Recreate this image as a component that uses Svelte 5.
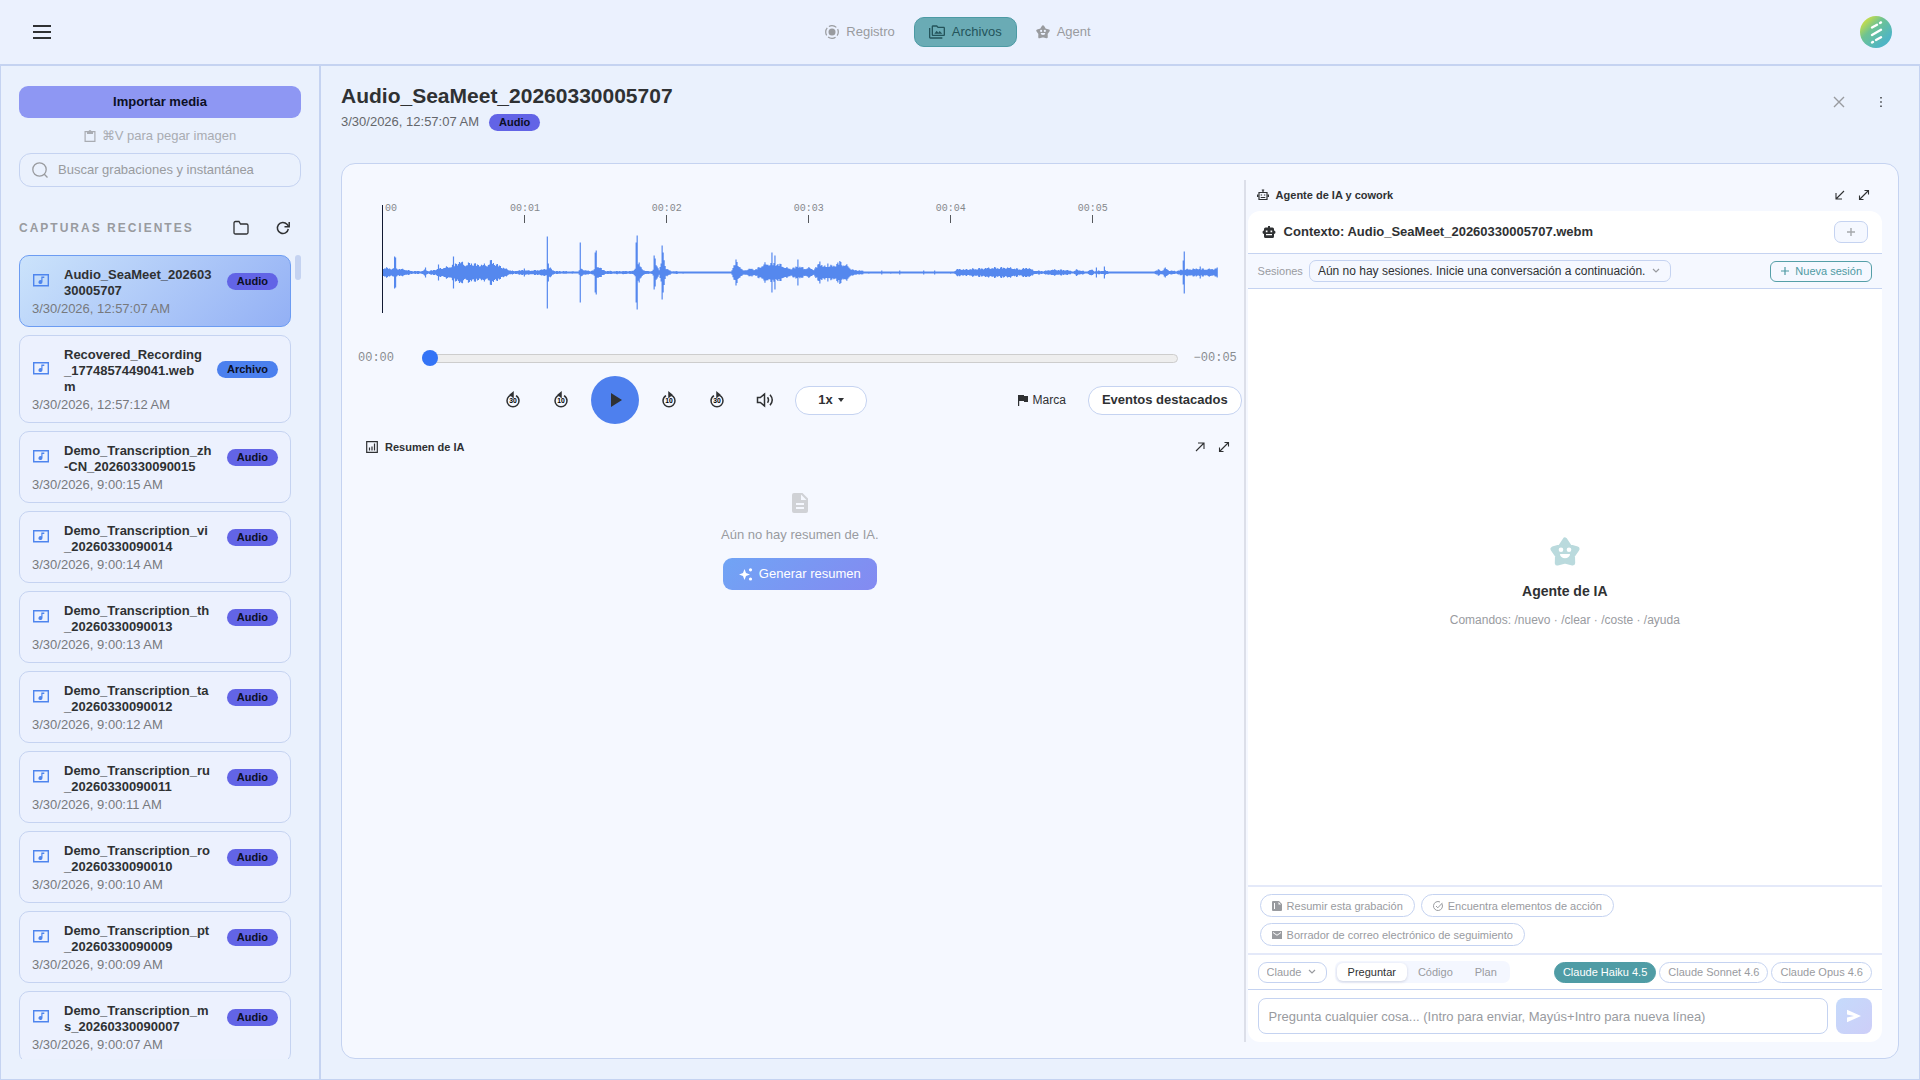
<script>
  const recordings = [
    { name: 'Audio_SeaMeet_20260330005707', date: '3/30/2026, 12:57:07 AM', kind: 'Audio', active: true },
    { name: 'Recovered_Recording_1774857449041.webm', date: '3/30/2026, 12:57:12 AM', kind: 'Archivo' },
    { name: 'Demo_Transcription_zh-CN_20260330090015', date: '3/30/2026, 9:00:15 AM', kind: 'Audio' },
    { name: 'Demo_Transcription_vi_20260330090014', date: '3/30/2026, 9:00:14 AM', kind: 'Audio' },
    { name: 'Demo_Transcription_th_20260330090013', date: '3/30/2026, 9:00:13 AM', kind: 'Audio' },
    { name: 'Demo_Transcription_ta_20260330090012', date: '3/30/2026, 9:00:12 AM', kind: 'Audio' },
    { name: 'Demo_Transcription_ru_20260330090011', date: '3/30/2026, 9:00:11 AM', kind: 'Audio' },
    { name: 'Demo_Transcription_ro_20260330090010', date: '3/30/2026, 9:00:10 AM', kind: 'Audio' },
    { name: 'Demo_Transcription_pt_20260330090009', date: '3/30/2026, 9:00:09 AM', kind: 'Audio' },
    { name: 'Demo_Transcription_ms_20260330090007', date: '3/30/2026, 9:00:07 AM', kind: 'Audio' }
  ];

  const duration = 5.88;
  const marks = [1, 2, 3, 4, 5];

  // Loudness envelope: [position, half height], joined by straight lines.
  const envelope = [
    [0, 5], [9, 4], [14, 4], [22, 3], [28, 1.5], [38, 1.5], [42, 3], [45, 1.5], [52, 3], [60, 5], [66, 6],
    [72, 9], [77, 11], [82, 8], [88, 10], [94, 8], [104, 8], [108, 12], [112, 9], [118, 6], [122, 4], [126, 2.5],
    [130, 1.5], [141, 2.5], [145, 2], [155, 2.5], [162, 3.5], [166, 5], [169, 3], [172, 1.5], [195, 1], [198, 4],
    [201, 2.5], [207, 1.5], [211, 3], [215, 7], [219, 3], [223, 1.5], [250, 1.5], [252, 5], [256, 9], [259, 4],
    [262, 1.5], [269, 1.5], [273, 10], [276, 3], [278, 8], [281, 14], [283, 4], [288, 1.5], [300, 1], [348, 1],
    [350, 5], [353, 12], [357, 6], [360, 2], [368, 4], [372, 3], [377, 6], [382, 9], [388, 9], [394, 9],
    [398, 8], [403, 5], [408, 4], [414, 6], [418, 6], [421, 4], [426, 5], [431, 3], [437, 10], [441, 6],
    [446, 7], [451, 7], [457, 11], [461, 8], [465, 7], [468, 4], [471, 2.5], [479, 2], [482, 1], [571, 1],
    [576, 4], [581, 3], [594, 4], [614, 5], [626, 5], [637, 3.5], [646, 5], [651, 2], [661, 1.5], [671, 3],
    [684, 2.5], [691, 1], [694, 3], [699, 2], [704, 1], [709, 3], [712, 1.5], [723, 2], [727, 1], [772, 1],
    [776, 3], [780, 2], [783, 5], [787, 2], [794, 1.5], [800, 3], [817, 4], [824, 3.5], [834, 4]
  ];
  const peaks = {
    11: 16, 12: 15, 42: 5, 55: 8, 70: 16, 141: 4, 164: 36, 165: 9, 197: 30, 212: 20, 213: 22, 253: 30, 254: 37,
    271: 17, 272: 14, 279: 27, 280: 20, 389: 20, 392: 17, 415: 13, 437: 11, 445: 9, 499: 2, 517: 2, 541: 2,
    552: 2, 714: 5, 722: 6, 783: 5, 801: 12, 802: 21, 818: 6, 835: 5
  };

  function loudness(x) {
    for (let i = 1; i < envelope.length; i++) {
      const [x1, y1] = envelope[i];
      const [x0, y0] = envelope[i - 1];
      if (x <= x1) return y0 + ((y1 - y0) * (x - x0)) / (x1 - x0);
    }
    return 4;
  }

  let wave = '';
  for (let x = 0; x < 836; x++) {
    const ripple = 0.72 + 0.28 * Math.abs(Math.sin(x * 12.9898) * Math.cos(x * 4.137)) * 1.5;
    const h = peaks[x] ?? Math.max(0.9, loudness(x) * ripple);
    wave += `M${x} ${(67.5 - h).toFixed(1)}h1.2v${(h * 2).toFixed(1)}h-1.2z`;
  }

  const models = ['Claude Haiku 4.5', 'Claude Sonnet 4.6', 'Claude Opus 4.6'];
  const modes = ['Preguntar', 'Código', 'Plan'];
  let position = 0;
  let question = '';
  let search = '';
</script>

{#snippet star()}
  <svg class="star" viewBox="0 0 30 30" aria-hidden="true">
    <path d="M15 3 19.300 9.700 27 12 22.500 18.500 22.700 26 15 24 7.300 26 7.500 18.500 3 12 10.700 9.700z" fill="currentColor" stroke="currentColor" stroke-width="5" stroke-linejoin="round" />
    <circle class="face" cx="11" cy="12.700" r="2.300" /><circle class="face" cx="19" cy="12.700" r="2.300" />
    <path class="face" d="M10 17h10a5 4.300 0 0 1-10 0z" />
  </svg>
{/snippet}

{#snippet expand()}
  <svg class="i12" viewBox="0 0 12 12" aria-hidden="true"><path d="M2 10 10 2M6.500 1.500h4v4M5.500 10.500h-4v-4" fill="none" stroke="currentColor" stroke-width="1.100" /></svg>
{/snippet}

{#snippet skip(seconds, forward)}
  <svg class="i18" viewBox="0 0 24 24" aria-hidden="true">
    <path d={forward ? 'M4 13a8 8 0 1 0 8-8h2M4 13a8 8 0 0 1 4-6.900' : 'M20 13a8 8 0 1 1-8-8h-2M20 13a8 8 0 0 0-4-6.900'} stroke-dasharray="37.500 3 12" fill="none" stroke="currentColor" stroke-width="2" />
    <path d={forward ? 'M11 0l6 5-6 5z' : 'M13 0 7 5l6 5z'} fill="currentColor" />
    <text x="12" y="16.500" text-anchor="middle">{seconds}</text>
  </svg>
{/snippet}

<div class="app">
  <header class="topbar">
    <button class="plain menu" aria-label="Menú">
      <svg class="i20" viewBox="0 0 20 20" aria-hidden="true"><path d="M1 4h18M1 10h18M1 16h18" stroke="currentColor" stroke-width="2" /></svg>
    </button>
    <nav>
      <button class="tab">
        <svg class="i14" viewBox="1 1 14 14" aria-hidden="true"><circle cx="8" cy="8" r="3.500" fill="currentColor" /><circle cx="8" cy="8" r="6.300" fill="none" stroke="currentColor" stroke-width="1.200" stroke-dasharray="7.900 2" stroke-dashoffset="4" /></svg>
        Registro
      </button>
      <button class="tab current">
        <svg class="i16" viewBox="0 0 24 24" aria-hidden="true"><path d="M2 6H0v14c0 1.100.9 2 2 2h18v-2H2V6zm20-2h-8l-2-2H6c-1.100 0-2 .9-2 2v12c0 1.100.9 2 2 2h16c1.100 0 2-.9 2-2V6c0-1.100-.9-2-2-2zm0 12H6V4h5.200l2 2H22v10z" fill="currentColor" /><path d="M8 14.500l3.500-4.500 2.500 3 2-2.500 4 4z" fill="currentColor" /></svg>
        Archivos
      </button>
      <button class="tab">{@render star()}Agent</button>
    </nav>
    <button class="plain avatar" aria-label="Cuenta">
      <svg viewBox="0 0 32 32" aria-hidden="true">
        <defs><linearGradient id="brand" x1="0" y1="0" x2=".75" y2=".8"><stop offset=".08" stop-color="#e3e532" /><stop offset=".5" stop-color="#6ec392" /><stop offset="1" stop-color="#4fb5c4" /></linearGradient></defs>
        <circle cx="16" cy="16" r="16" fill="url(#brand)" />
        <path d="M12 11.500 17 8.800M20 7l1-.6M12 19l9-5.200M12 26.500l1-.6M16 24l5-2.700" stroke="#fff" stroke-width="2.400" stroke-linecap="round" />
      </svg>
    </button>
  </header>

  <div class="body">
    <aside>
      <button class="import">Importar media</button>
      <p class="hint">
        <svg class="i12" viewBox="0 0 12 12" aria-hidden="true"><path d="M1.100 1.600h9.800v9.800H1.100z" fill="none" stroke="currentColor" stroke-width="1.200" /><path d="M3 1h1.500q1.500-1.800 3 0H9v3H3z" fill="currentColor" /></svg>
        ⌘V para pegar imagen
      </p>
      <label class="search">
        <svg class="i16" viewBox="0 0 16 16" aria-hidden="true"><circle cx="7.500" cy="7.500" r="6.700" fill="none" stroke="currentColor" stroke-width="1.300" /><path d="m12.300 12.300 3.200 3.200" stroke="currentColor" stroke-width="1.300" /></svg>
        <input type="text" aria-label="Buscar" placeholder="Buscar grabaciones y instantánea" bind:value={search} />
      </label>
      <div class="listhead">
        <h2>CAPTURAS RECIENTES</h2>
        <button class="plain square" aria-label="Carpeta"><svg class="i16" viewBox="0 0 16 16" aria-hidden="true"><path d="M1 3q0-1.500 1.500-1.500H6L7.500 4h6Q15 4 15 5.500v7q0 1.500-1.500 1.500h-11Q1 14 1 12.500z" fill="none" stroke="currentColor" stroke-width="1.300" /></svg></button>
        <button class="plain square" aria-label="Actualizar"><svg class="i14" viewBox="0 0 14 14" aria-hidden="true"><path d="M12.300 8A5.500 5.500 0 1 1 11 3.300L12.500 5" fill="none" stroke="currentColor" stroke-width="1.500" /><path d="M13.200 1v4.800H8.500" fill="none" stroke="currentColor" stroke-width="1.500" /></svg></button>
      </div>
      <div class="scroller">
        <ul>
          {#each recordings as item}
            <li>
              <button class="card" class:active={item.active}>
                <span class="cardtop">
                  <svg class="i18" viewBox="0 0 18 18" aria-hidden="true"><path d="M1.700 3.700h14.600v11H1.700z" fill="none" stroke="currentColor" stroke-width="1.400" /><path d="M9.300 5.500h3v1.600h-1.800v4a2 2 0 1 1-1.200-1.900z" fill="currentColor" /></svg>
                  <span class="name">{item.name}</span>
                  <span class="badge" class:file={item.kind === 'Archivo'}>{item.kind}</span>
                </span>
                <span class="date">{item.date}</span>
              </button>
            </li>
          {/each}
        </ul>
        <div class="thumb"></div>
      </div>
    </aside>

    <main>
      <div class="heading">
        <div>
          <h1>Audio_SeaMeet_20260330005707</h1>
          <p class="sub">3/30/2026, 12:57:07 AM <span class="badge">Audio</span></p>
        </div>
        <div class="actions">
          <button class="plain square muted" aria-label="Cerrar"><svg class="i12" viewBox="0 0 12 12" aria-hidden="true"><path d="m1 1 10 10M11 1 1 11" stroke="currentColor" stroke-width="1.400" /></svg></button>
          <button class="plain square" aria-label="Más opciones"><svg class="i12" viewBox="0 0 12 12" aria-hidden="true"><path d="M5.300 1h1.400v1.400H5.300zM5.300 5.300h1.400v1.400H5.300zM5.300 9.600h1.400V11H5.300z" fill="currentColor" /></svg></button>
        </div>
      </div>

      <div class="panel">
        <section class="player">
          <div class="wave">
            <span class="mark start">00</span>
            {#each marks as mark}
              <span class="mark" style="left: {(mark / duration) * 100}%">00:0{mark}</span>
            {/each}
            <svg viewBox="0 0 836 108" preserveAspectRatio="none" aria-hidden="true"><path d={wave} /></svg>
          </div>
          <div class="seek">
            <span>00:00</span>
            <input type="range" min="0" max="100" aria-label="Posición" bind:value={position} />
            <span>−00:05</span>
          </div>
          <div class="controls">
            <div class="transport">
              <button class="plain ctl" aria-label="Retroceder 30 segundos">{@render skip(30, false)}</button>
              <button class="plain ctl" aria-label="Retroceder 10 segundos">{@render skip(10, false)}</button>
              <button class="plain play" aria-label="Reproducir"><svg class="i14" viewBox="0 0 14 14" aria-hidden="true"><path d="M3 0v14l11-7z" fill="currentColor" /></svg></button>
              <button class="plain ctl" aria-label="Avanzar 10 segundos">{@render skip(10, true)}</button>
              <button class="plain ctl" aria-label="Avanzar 30 segundos">{@render skip(30, true)}</button>
              <button class="plain ctl" aria-label="Volumen"><svg class="i18" viewBox="0 0 18 18" aria-hidden="true"><path d="M1.500 6.500h2.800L8.500 3v12l-4.200-3.500H1.500zM11.500 6.200q2 2.800 0 5.600M14 3.800q4.500 5.200 0 10.400" fill="none" stroke="currentColor" stroke-width="1.500" /></svg></button>
              <span class="drop speed">
                <select aria-label="Velocidad"><option>1x</option></select>
                <svg class="caret" viewBox="0 0 6 4" aria-hidden="true"><path d="M0 0h6L3 4z" fill="currentColor" /></svg>
              </span>
            </div>
            <button class="plain flag"><svg class="i12" viewBox="0 0 12 12" aria-hidden="true"><path d="M1 1h6v1h4v6H7V7H2.200v5H1z" fill="currentColor" /></svg>Marca</button>
            <button class="events">Eventos destacados</button>
          </div>
          <div class="section-head left">
            <svg class="i12" viewBox="0 0 12 12" aria-hidden="true"><path d="M.7.700h10.600v10.600H.7z" fill="none" stroke="currentColor" stroke-width="1.200" /><path d="M3.500 9.500V6.500M6 9.500v-4M8.500 9.500v-7" stroke="currentColor" stroke-width="1.200" /></svg>
            <h3>Resumen de IA</h3>
            <button class="plain mini" aria-label="Separar"><svg class="i12" viewBox="0 0 12 12" aria-hidden="true"><path d="m2 10 7.500-7.500M4 2h6v6" fill="none" stroke="currentColor" stroke-width="1.100" /></svg></button>
            <button class="plain mini" aria-label="Ampliar">{@render expand()}</button>
          </div>
          <div class="nosummary">
            <svg class="doc" viewBox="0 0 16 20" aria-hidden="true"><path fill-rule="evenodd" d="M2 0h8.500L16 5.500V18q0 2-2 2H2q-2 0-2-2V2Q0 0 2 0zm7 1.500V7h5.500zM4 10v2h8v-2zm0 4v2h8v-2z" fill="currentColor" /></svg>
            <p>Aún no hay resumen de IA.</p>
            <button class="generate"><svg class="i14" viewBox="0 0 14 14" aria-hidden="true"><path d="M5.500 2 7 6l4 1.500L7 9l-1.500 4L4 9 0 7.500 4 6z" fill="currentColor" /><circle cx="11.500" cy="2.800" r="1.600" fill="currentColor" /><circle cx="11.500" cy="12" r="1.600" fill="currentColor" /></svg>Generar resumen</button>
          </div>
        </section>

        <div class="divider"></div>

        <section class="agent">
          <div class="section-head">
            <svg class="i12" viewBox="0 0 12 12" aria-hidden="true"><path d="M2 3.500h8v7H2zM6 3.500v-2M4.800 1h2.400M.6 5.500v2.500M11.400 5.500v2.500M3.700 6h1.400M6.900 6h1.400M3.700 8.500h4.600" fill="none" stroke="currentColor" stroke-width="1.200" /></svg>
            <h3>Agente de IA y cowork</h3>
            <button class="plain mini" aria-label="Acoplar"><svg class="i12" viewBox="0 0 12 12" aria-hidden="true"><path d="M10 2 2.500 9.500M2 4v6h6" fill="none" stroke="currentColor" stroke-width="1.100" /></svg></button>
            <button class="plain mini" aria-label="Ampliar">{@render expand()}</button>
          </div>
          <div class="chat">
            <div class="context">
              <svg class="i14" viewBox="0 0 14 14" aria-hidden="true"><path fill-rule="evenodd" d="M6 1h2v1.500h2.500Q12 2.500 12 4v1.500q1.500 0 1.500 1.700T12 9v2.500q0 1.500-1.500 1.500h-7Q2 13 2 11.500V9Q.5 9 .5 7.200T2 5.500V4q0-1.500 1.500-1.500H6zM3.800 5.500v1.700h1.700V5.500zm4.700 0v1.700h1.700V5.500zM4 9v1.300h6V9z" fill="currentColor" /></svg>
              <h2>Contexto: Audio_SeaMeet_20260330005707.webm</h2>
              <button class="add" aria-label="Añadir"><svg class="i10" viewBox="0 0 10 10" aria-hidden="true"><path d="M5 1v8M1 5h8" stroke="currentColor" stroke-width="1.400" /></svg></button>
            </div>
            <div class="sessions">
              <label for="session">Sesiones</label>
              <span class="drop session">
                <select id="session"><option>Aún no hay sesiones. Inicie una conversación a continuación.</option></select>
                <svg class="chev" viewBox="0 0 8 6" aria-hidden="true"><path d="m1 1 3 3 3-3" fill="none" stroke="currentColor" stroke-width="1.200" /></svg>
              </span>
              <button class="newsession"><svg class="i10" viewBox="0 0 10 10" aria-hidden="true"><path d="M5 1v8M1 5h8" stroke="currentColor" stroke-width="1.200" /></svg>Nueva sesión</button>
            </div>
            <div class="empty">
              {@render star()}
              <h3>Agente de IA</h3>
              <p>Comandos: /nuevo · /clear · /coste · /ayuda</p>
            </div>
            <div class="suggest">
              <button><svg class="i10" viewBox="0 0 10 10" aria-hidden="true"><path fill-rule="evenodd" d="M0 1q0-1 1-1h6l3 3v6q0 1-1 1H1q-1 0-1-1zM2 2v6h1V2zM6.500 1v2.500H9z" fill="currentColor" /></svg>Resumir esta grabación</button>
              <button><svg class="i10" viewBox="0 0 10 10" aria-hidden="true"><path d="M9 3a4.500 4.500 0 1 1-2-2M3 5l1.800 1.800L9.500 1.800" fill="none" stroke="currentColor" /></svg>Encuentra elementos de acción</button>
              <button><svg class="i10" viewBox="0 0 10 10" aria-hidden="true"><path fill-rule="evenodd" d="M0 1h10v8H0zm1 1v1l4 2.700L9 3V2L5 4.700z" fill="currentColor" /></svg>Borrador de correo electrónico de seguimiento</button>
            </div>
            <div class="options">
              <span class="drop provider">
                <select aria-label="Proveedor"><option>Claude</option></select>
                <svg class="chev" viewBox="0 0 8 6" aria-hidden="true"><path d="m1 1 3 3 3-3" fill="none" stroke="currentColor" stroke-width="1.200" /></svg>
              </span>
              <div class="modes">
                {#each modes as mode, i}<button class:on={i === 0}>{mode}</button>{/each}
              </div>
              <div class="models">
                {#each models as model, i}<button class:on={i === 0}>{model}</button>{/each}
              </div>
            </div>
            <form class="ask">
              <input type="text" aria-label="Pregunta" placeholder="Pregunta cualquier cosa... (Intro para enviar, Mayús+Intro para nueva línea)" bind:value={question} />
              <button type="button" aria-label="Enviar"><svg class="i14" viewBox="0 0 14 14" aria-hidden="true"><path d="M0 .800 14 7 0 13.200V8.500L7 7 0 5.500z" fill="currentColor" /></svg></button>
            </form>
          </div>
        </section>
      </div>
    </main>
  </div>
</div>

<style>
  :global(body) { margin: 0; }
  .app {
    --line: #c5d3f1;
    --ink: #2f3133;
    --muted: #999b9f;
    height: 100vh; display: flex; flex-direction: column; overflow: hidden;
    background: #eaf1fd; color: var(--ink);
    font: 13px/16px "Liberation Sans", Arial, sans-serif;
  }
  .app * { box-sizing: border-box; }
  h1, h2, h3, p, ul { margin: 0; padding: 0; }
  ul { list-style: none; }
  button, input, select { font: inherit; color: inherit; margin: 0; }
  button { display: flex; align-items: center; justify-content: center; padding: 0; border: 0; cursor: pointer; white-space: nowrap; }
  svg { display: block; flex: none; }
  .plain { background: none; }
  .square { width: 32px; height: 32px; }
  .muted { color: var(--muted); }
  .i10 { width: 10px; height: 10px; }
  .i12 { width: 12px; height: 12px; }
  .i14 { width: 14px; height: 14px; }
  .i16 { width: 16px; height: 16px; }
  .i18 { width: 18px; height: 18px; }
  .i20 { width: 20px; height: 20px; }
  .star { width: 14px; height: 14px; }
  .face { fill: #ebf1fe; }

  .topbar { display: grid; grid-template-columns: 1fr auto 1fr; align-items: center; height: 66px; flex: none; padding: 0 28px; border-bottom: 2px solid var(--line); background: #ebf1fe; }
  .menu { width: 28px; height: 28px; }
  nav { display: flex; gap: 4px; padding-right: 4px; }
  .tab { height: 30px; gap: 7px; padding: 0 14px; border: 1px solid transparent; border-radius: 10px; background: none; color: var(--muted); }
  .current { background: #6aabb5; border-color: #4c9aa4; color: #24545b; }
  .avatar { justify-self: end; }
  .avatar svg { width: 32px; height: 32px; }

  .body { flex: 1; min-height: 0; display: flex; border: 1px solid var(--line); border-top: 0; }
  aside { width: 320px; flex: none; display: flex; flex-direction: column; padding: 20px 18px; border-right: 2px solid var(--line); }
  .import { height: 32px; flex: none; border-radius: 9px; background: #8e97f3; color: #0c0f24; font-weight: 700; }
  .hint { display: flex; align-items: center; justify-content: center; gap: 6px; height: 35px; color: #a9acb2; }
  .search { display: flex; align-items: center; gap: 10px; height: 34px; flex: none; padding: 0 12px; border: 1px solid var(--line); border-radius: 12px; color: var(--muted); }
  .search input { flex: 1; min-width: 0; padding: 0; border: 0; outline: 0; background: none; }
  input::placeholder { color: var(--muted); opacity: 1; }
  .listhead { display: flex; align-items: center; gap: 10px; margin: 25px 2px 11px 0; }
  .listhead h2 { flex: 1; font-size: 12px; letter-spacing: 2px; color: var(--muted); white-space: nowrap; }
  .scroller { flex: 1; min-height: 0; display: flex; gap: 4px; overflow: hidden; }
  .scroller ul { flex: 1; display: flex; flex-direction: column; gap: 8px; }
  .thumb { width: 6px; height: 25px; border-radius: 3px; background: var(--line); }
  .card { width: 100%; flex-direction: column; align-items: stretch; gap: 2px; padding: 11px 12px 9px; border: 1px solid var(--line); border-radius: 10px; background: #ecf1fe; text-align: left; white-space: normal; }
  .card.active { border-color: #6c9cf2; background: linear-gradient(135deg, #cbe3fb, #93b0f5); }
  .cardtop { display: flex; align-items: center; color: #4e85ee; }
  .cardtop svg { margin-bottom: 6px; }
  .cardtop .badge { margin-bottom: 3px; }
  .name { flex: 1; min-width: 0; margin: 0 13px 0 14px; color: var(--ink); font-weight: 700; word-break: break-all; }
  .badge { flex: none; padding: 0 10px; border-radius: 9px; background: #6264e6; color: #0c0f24; font-size: 11px; line-height: 17px; font-weight: 700; }
  .badge.file { background: #4b80ee; }
  .date { color: #77797d; }

  main { flex: 1; min-width: 0; display: flex; flex-direction: column; padding: 0 20px 20px; }
  .heading { display: flex; justify-content: space-between; height: 97px; flex: none; padding-top: 16px; }
  h1 { font-size: 21px; line-height: 28px; }
  .sub { display: flex; align-items: center; gap: 10px; margin-top: 3px; line-height: 18px; color: #65676b; }
  .actions { display: flex; gap: 10px; padding: 4px 2px 0 0; }
  .panel { flex: 1; min-height: 0; display: flex; padding: 16px; border: 1px solid var(--line); border-radius: 14px; background: #f5f8ff; }

  .player { flex: 39; min-width: 0; padding-top: 25px; display: flex; flex-direction: column; }
  .wave { position: relative; height: 108px; flex: none; margin: 0 24px; border-left: 1px solid #111a33; }
  .wave svg { width: 100%; height: 100%; }
  .wave path { fill: #5588ee; }
  .mark { position: absolute; top: -2px; display: flex; flex-direction: column; align-items: center; width: 40px; margin-left: -20px; font: 10px/12px "Liberation Mono", monospace; color: #85888c; }
  .mark::after { content: ""; width: 1px; height: 8px; background: #55585c; }
  .mark.start { left: 2px; width: auto; margin: 0; }
  .mark.start::after { display: none; }
  .seek { display: flex; align-items: center; gap: 16px; height: 24px; flex: none; margin-top: 33px; }
  .seek span { width: 48px; flex: none; font: 12px/16px "Liberation Mono", monospace; color: #898c90; white-space: nowrap; }
  .seek input { flex: 1; min-width: 0; height: 16px; appearance: none; background: none; }
  .seek input::-webkit-slider-runnable-track { height: 9px; border: 1px solid #cdcdcd; border-radius: 5px; background: #eee; }
  .seek input::-webkit-slider-thumb { appearance: none; width: 16px; height: 16px; margin: -5px 0 0 -1px; border-radius: 50%; background: #3474f6; }
  .controls { display: flex; align-items: center; height: 48px; flex: none; margin-top: 6px; }
  .transport { flex: 1; display: flex; align-items: center; justify-content: center; gap: 12px; }
  .ctl { width: 36px; height: 36px; }
  .ctl text { font-size: 9px; font-weight: 700; }
  .play { width: 48px; height: 48px; border-radius: 50%; background: #4e80ee; }
  .drop { position: relative; display: flex; align-items: center; }
  .drop select { appearance: none; border: 1px solid var(--line); outline: 0; background: #fff; }
  .drop svg { position: absolute; pointer-events: none; }
  .speed select { width: 72px; height: 29px; padding: 0 22px; border-radius: 14px; font-weight: 700; }
  .caret { width: 6px; height: 4px; right: 23px; }
  .flag { gap: 4px; height: 29px; padding: 0 12px; font-size: 12px; }
  .events { height: 29px; margin-left: 10px; padding: 0 13px; border: 1px solid var(--line); border-radius: 14px; background: #fff; font-weight: 700; }
  .section-head { display: flex; align-items: center; height: 31px; flex: none; padding: 0 6px 2px 9px; }
  .section-head.left { margin-top: 7px; padding: 0 6px 0 8px; }
  .section-head h3 { flex: 1; margin-left: 7px; font-size: 11px; }
  .mini { width: 24px; height: 24px; }
  .nosummary { display: flex; flex-direction: column; align-items: center; padding-top: 31px; color: var(--muted); }
  .doc { width: 16px; height: 20px; color: #d0d2d6; }
  .nosummary p { margin: 14px 0 15px; }
  .generate { height: 32px; gap: 6px; padding: 0 16px; border-radius: 9px; background: linear-gradient(135deg, #70a4f5, #848af1); color: #fff; }

  .divider { width: 2px; flex: none; margin: 0 2px; background: #dcdfe9; }
  .agent { flex: 28; min-width: 0; display: flex; flex-direction: column; }
  .chat { flex: 1; min-height: 0; display: flex; flex-direction: column; border-radius: 12px; background: #fff; font-size: 11px; }
  .context { display: flex; align-items: center; gap: 8px; height: 43px; flex: none; padding: 0 14px; border-bottom: 1px solid var(--line); }
  .context h2 { flex: 1; font-size: 13px; }
  .add { width: 34px; height: 22px; border: 1px solid var(--line); border-radius: 7px; background: #f5f8ff; color: #a5a8ac; }
  .sessions { display: flex; align-items: center; gap: 6px; height: 35px; flex: none; padding: 0 10px; border-bottom: 1px solid var(--line); background: #f5f8ff; }
  .sessions label { color: var(--muted); }
  .session select { height: 22px; padding: 0 24px 0 8px; border-radius: 7px; background: #f5f8ff; font-size: 12px; }
  .chev { width: 8px; height: 6px; right: 11px; color: var(--muted); }
  .newsession { gap: 5px; height: 21px; margin-left: auto; padding: 0 9px; border: 1px solid #559fa8; border-radius: 6px; background: none; color: #4f9aa3; }
  .empty { flex: 1; min-height: 0; display: flex; flex-direction: column; align-items: center; justify-content: center; padding-bottom: 9px; color: var(--muted); font-size: 12px; }
  .empty .star { width: 30px; height: 30px; color: #badadd; }
  .empty .face { fill: #fff; }
  .empty h3 { margin: 16px 0 13px; font-size: 14px; color: var(--ink); }
  .suggest { display: flex; flex-wrap: wrap; gap: 6px; padding: 7px 12px; border-top: 2px solid #e4e9f9; }
  .suggest button { gap: 5px; height: 23px; padding: 0 11px; border: 1px solid var(--line); border-radius: 12px; background: #fff; color: var(--muted); }
  .options { display: flex; align-items: center; gap: 8px; height: 37px; flex: none; padding: 0 10px; border-top: 2px solid #e4e9f9; border-bottom: 1px solid var(--line); color: var(--muted); }
  .provider select { width: 69px; height: 21px; padding: 0 8px; border-radius: 9px; }
  .modes { display: flex; padding: 2px; border-radius: 7px; background: #f4f7ff; }
  .modes button { height: 18px; padding: 0 11px; border-radius: 6px; background: none; }
  .modes .on { background: #fff; color: var(--ink); box-shadow: 0 1px 3px rgb(60 70 110 / .2); }
  .models { display: flex; gap: 3px; margin-left: auto; }
  .models button { height: 21px; padding: 0 8px; border: 1px solid var(--line); border-radius: 11px; background: #fff; }
  .models .on { border-color: #4f9ca5; background: #4f9ca5; color: #fff; }
  .ask { display: flex; gap: 8px; padding: 8px 10px; font-size: 13px; }
  .ask input { flex: 1; min-width: 0; height: 36px; padding: 0 10px; border: 1px solid var(--line); border-radius: 8px; outline: 0; background: #fff; }
  .ask button { width: 36px; height: 36px; border-radius: 8px; background: linear-gradient(135deg, #c5dafb, #cdcef8); color: #fff; }
</style>
